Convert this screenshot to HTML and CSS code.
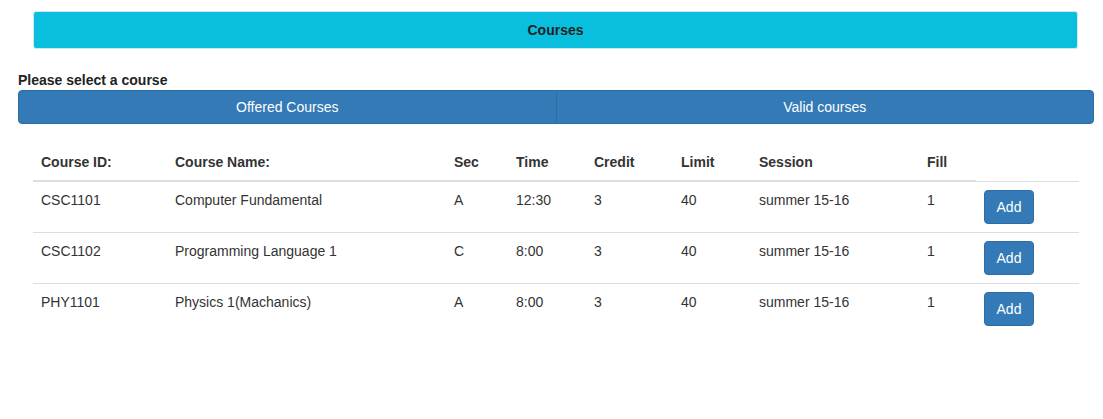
FILE: index.html
```html
<!DOCTYPE html>
<html>
<head>
<meta charset="utf-8">
<link rel="stylesheet" href="styles.css">
</head>
<body>
<div class="page">
  <div class="title-bar">Courses</div>
  <div class="select-label">Please select a course</div>
  <div class="tabs">
    <button class="tab">Offered Courses</button>
    <button class="tab">Valid courses</button>
  </div>
  <table class="courses">
    <colgroup>
      <col class="c-id"><col class="c-name"><col class="c-sec"><col class="c-time"><col class="c-credit"><col class="c-limit"><col class="c-session"><col class="c-fill"><col class="c-act">
    </colgroup>
    <thead>
      <tr>
        <th>Course ID:</th><th>Course Name:</th><th>Sec</th><th>Time</th><th>Credit</th><th>Limit</th><th>Session</th><th>Fill</th>
      </tr>
    </thead>
    <tbody>
      <tr>
        <td>CSC1101</td><td>Computer Fundamental</td><td>A</td><td>12:30</td><td>3</td><td>40</td><td>summer 15-16</td><td>1</td><td><button class="add">Add</button></td>
      </tr>
      <tr>
        <td>CSC1102</td><td>Programming Language 1</td><td>C</td><td>8:00</td><td>3</td><td>40</td><td>summer 15-16</td><td>1</td><td><button class="add">Add</button></td>
      </tr>
      <tr>
        <td>PHY1101</td><td>Physics 1(Machanics)</td><td>A</td><td>8:00</td><td>3</td><td>40</td><td>summer 15-16</td><td>1</td><td><button class="add">Add</button></td>
      </tr>
    </tbody>
  </table>
</div>
</body>
</html>
```
FILE: styles.css
```css
* { box-sizing: border-box; }
html, body { margin: 0; padding: 0; background: #fff; }
body {
  font-family: "Liberation Sans", Arial, sans-serif;
  font-size: 14px;
  line-height: 20px;
  color: #333;
}
.page { padding: 11px 9px 0 18px; }
.title-bar {
  margin: 0 16px 0 15px;
  height: 38px;
  background: #0abfde;
  border: 1px solid #cfe9ef;
  border-radius: 3px;
  font-weight: bold;
  text-align: center;
  line-height: 36px;
  color: #222;
}
.select-label {
  margin-top: 21px;
  font-weight: bold;
  line-height: 20px;
  color: #222;
}
.tabs {
  display: flex;
}
.tab {
  flex: 1;
  height: 34px;
  background: #337ab7;
  border: 1px solid #2e6da4;
  color: #fff;
  font-family: inherit;
  font-size: 14px;
  padding: 0;
}
.tab:first-child { border-radius: 4px 0 0 4px; }
.tab:last-child { border-radius: 0 4px 4px 0; margin-left: -1px; }
.courses {
  margin: 20px 0 0 15px;
  width: 1046px;
  border-collapse: collapse;
  table-layout: fixed;
}
.c-id { width: 134px; }
.c-name { width: 279px; }
.c-sec { width: 62px; }
.c-time { width: 78px; }
.c-credit { width: 87px; }
.c-limit { width: 78px; }
.c-session { width: 168px; }
.c-fill { width: 57px; }
.c-act { width: 103px; }
.courses th {
  text-align: left;
  padding: 8px;
  line-height: 20px;
  font-weight: bold;
  border-bottom: 2px solid #ddd;
  vertical-align: bottom;
}
.courses td {
  padding: 8px;
  line-height: 20px;
  vertical-align: top;
  border-top: 1px solid #ddd;
}
.add {
  width: 50px;
  height: 34px;
  background: #337ab7;
  border: 1px solid #2e6da4;
  border-radius: 4px;
  color: #fff;
  font-family: inherit;
  font-size: 14px;
  padding: 0;
}
```
